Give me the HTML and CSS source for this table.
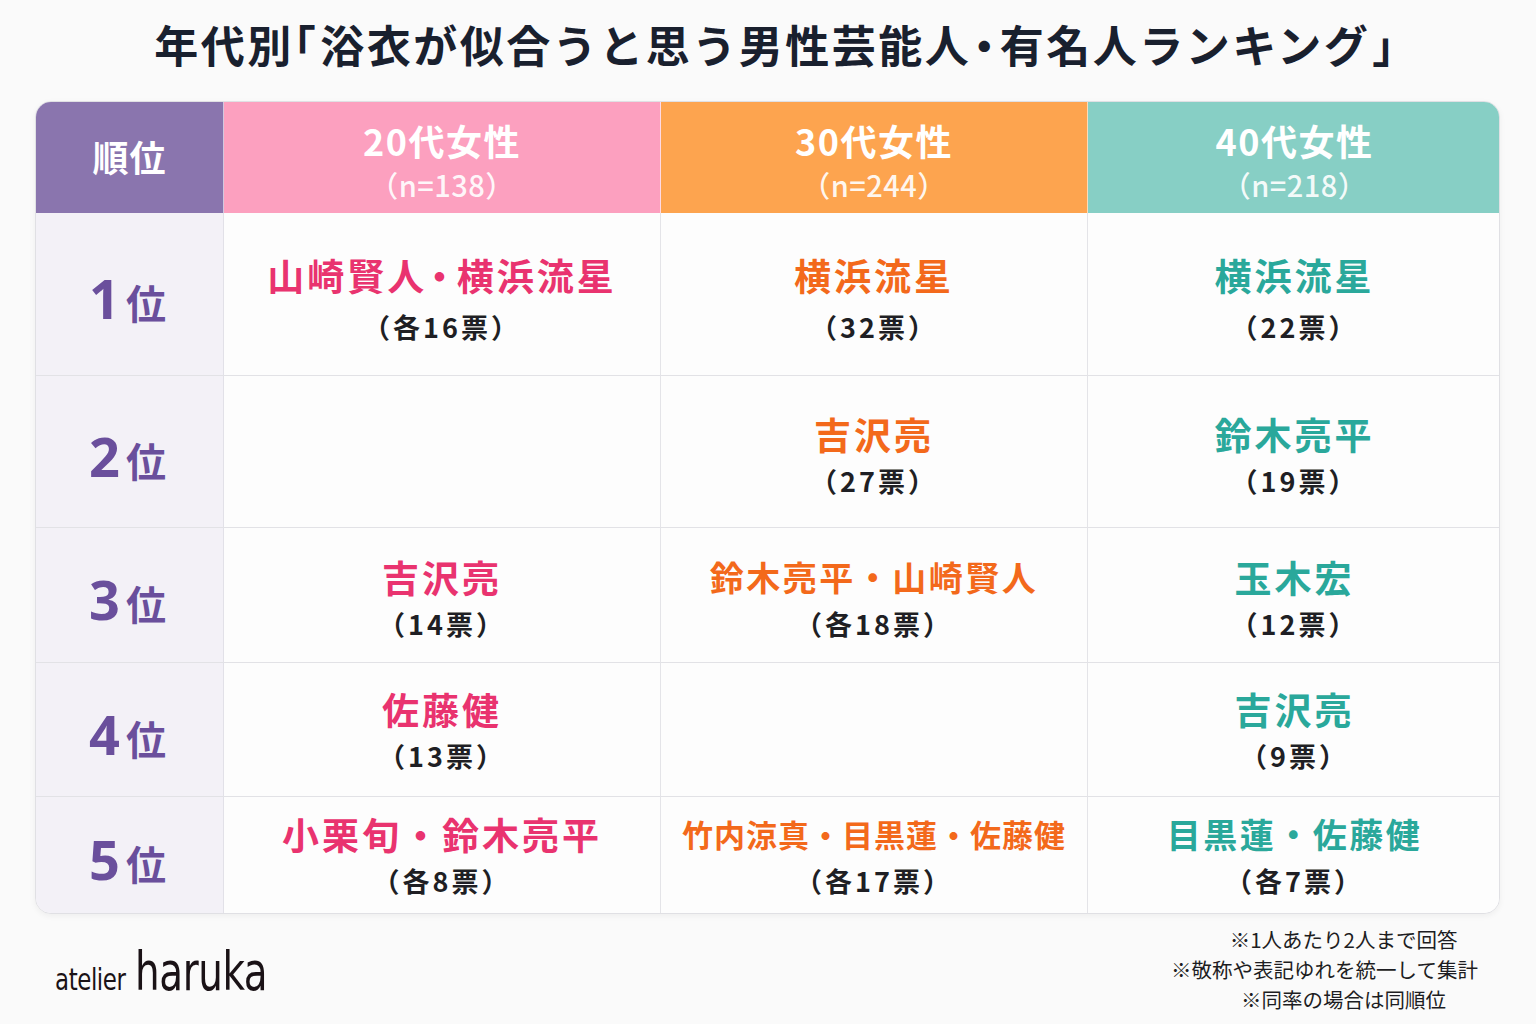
FILE: index.html
```html
<!DOCTYPE html>
<html lang="ja">
<head>
<meta charset="utf-8">
<title>年代別「浴衣が似合うと思う男性芸能人・有名人ランキング」</title>
<link rel="stylesheet" href="styles.css">
</head>
<body>
<div class="page">
  <h1 class="title">年代別<span class="br">「</span>浴衣が似合うと思う男性芸能人<span class="dot">・</span>有名人ランキング<span class="br end">」</span></h1>
  <div class="table">
    <div class="hd hd-rank">順位</div>
    <div class="hd hd-20"><span class="age">20代女性</span><span class="n">（n=138）</span></div>
    <div class="hd hd-30"><span class="age">30代女性</span><span class="n">（n=244）</span></div>
    <div class="hd hd-40"><span class="age">40代女性</span><span class="n">（n=218）</span></div>

    <div class="rank r1"><span class="num">1</span><span class="i">位</span></div>
    <div class="cell r1"><span class="name pink">山崎賢人<span class="ndot">・</span>横浜流星</span><span class="votes">（各16票）</span></div>
    <div class="cell r1"><span class="name orange">横浜流星</span><span class="votes">（32票）</span></div>
    <div class="cell r1 last"><span class="name teal">横浜流星</span><span class="votes">（22票）</span></div>

    <div class="rank r2"><span class="num">2</span><span class="i">位</span></div>
    <div class="cell r2"></div>
    <div class="cell r2"><span class="name orange">吉沢亮</span><span class="votes">（27票）</span></div>
    <div class="cell r2 last"><span class="name teal">鈴木亮平</span><span class="votes">（19票）</span></div>

    <div class="rank r3"><span class="num">3</span><span class="i">位</span></div>
    <div class="cell r3"><span class="name pink">吉沢亮</span><span class="votes">（14票）</span></div>
    <div class="cell r3"><span class="name orange mid">鈴木亮平・山崎賢人</span><span class="votes">（各18票）</span></div>
    <div class="cell r3 last"><span class="name teal">玉木宏</span><span class="votes">（12票）</span></div>

    <div class="rank r4"><span class="num">4</span><span class="i">位</span></div>
    <div class="cell r4"><span class="name pink">佐藤健</span><span class="votes">（13票）</span></div>
    <div class="cell r4"></div>
    <div class="cell r4 last"><span class="name teal">吉沢亮</span><span class="votes">（9票）</span></div>

    <div class="rank r5 bottom"><span class="num">5</span><span class="i">位</span></div>
    <div class="cell r5 bottom"><span class="name pink">小栗旬・鈴木亮平</span><span class="votes">（各8票）</span></div>
    <div class="cell r5 bottom"><span class="name orange small">竹内涼真・目黒蓮・佐藤健</span><span class="votes">（各17票）</span></div>
    <div class="cell r5 bottom last"><span class="name teal mid">目黒蓮・佐藤健</span><span class="votes">（各7票）</span></div>
  </div>
  <div class="footer">
    <div class="logo"><span class="atelier">atelier</span><span class="haruka">haruka</span></div>
    <div class="notes">
      <p class="n1">※1人あたり2人まで回答</p>
      <p class="n2">※敬称や表記ゆれを統一して集計</p>
      <p class="n3">※同率の場合は同順位</p>
    </div>
  </div>
</div>
</body>
</html>
```
FILE: styles.css
```css
* { box-sizing: border-box; }
html, body { margin: 0; padding: 0; }
body {
  background: #fafafa;
  font-family: "Noto Sans CJK JP", "Noto Sans", sans-serif;
  color: #1b2130;
  width: 1536px;
  height: 1024px;
  overflow: hidden;
}
.page {
  padding: 0 36px 0 35px;
}
.title {
  margin: 0;
  height: 101px;
  display: flex;
  align-items: center;
  justify-content: center;
  padding: 0 0 14px 16px;
  font-size: 44px;
  font-weight: 700;
  letter-spacing: 2.5px;
  color: #19202e;
  white-space: nowrap;
}
.title .br, .title .dot { font-feature-settings: "halt" 1; }
.title .br { margin-right: 2px; }
.title .br.end { margin-left: 2px; margin-right: 0; }
.title .dot { margin: 0 2px; }
.table {
  display: grid;
  grid-template-columns: 188px 437px 427px 413px;
  grid-template-rows: 111px 163px 152px 135px 134px 116px;
  border: 1px solid #e0e0e4;
  border-radius: 16px;
  overflow: hidden;
  background: #fdfdfd;
  box-shadow: 0 2px 6px rgba(0,0,0,0.05);
}
.hd {
  display: flex;
  flex-direction: column;
  align-items: center;
  justify-content: center;
  color: #fff;
  font-weight: 700;
  border-right: 1px solid rgba(255,255,255,0.6);
}
.hd-rank { background: #8a75ae; font-size: 36px; padding-bottom: 4px; letter-spacing: 1px; }
.hd-20 { background: #fca0bf; }
.hd-30 { background: #fda44f; }
.hd-40 { background: #87cfc5; border-right: none; }
.age { font-size: 36px; line-height: 40px; letter-spacing: 1.5px; margin-top: 6px; }
.n { font-size: 29px; font-weight: 500; line-height: 34px; margin-top: 7px; color: rgba(255,255,255,0.92); letter-spacing: 0.5px; }

.rank {
  display: flex;
  align-items: baseline;
  justify-content: center;
  align-content: center;
  flex-wrap: wrap;
  background: #f3f1f7;
  color: #6a4f9c;
  font-weight: 700;
  border-right: 1px solid #e2e1e8;
  border-bottom: 1px solid #e2e2e6;
  padding-top: 12px;
  padding-right: 4px;
}
.rank .num { font-size: 54px; line-height: 60px; font-family: "Noto Sans", "Open Sans", sans-serif; font-weight: 700; margin-right: 6px; }
.rank .i { font-size: 40px; line-height: 60px; }
.cell {
  display: flex;
  flex-direction: column;
  align-items: center;
  justify-content: center;
  border-right: 1px solid #e4e4e8;
  border-bottom: 1px solid #e2e2e6;
  background: #fdfdfd;
  padding-top: 6px;
}
.cell.r1 { padding-top: 8px; }
.cell.r1 .name { margin-bottom: 13px; }
.cell.r4 { padding-top: 0; }
.cell.r5 { padding-top: 0; }
.cell.last { border-right: none; }
.bottom { border-bottom: none; }
.name {
  font-size: 37px;
  line-height: 44px;
  font-weight: 700;
  letter-spacing: 3px;
  margin-bottom: 8px;
}
.name .ndot { font-feature-settings: "halt" 1; margin: 0 5px 0 3px; }
.name.mid { font-size: 34px; letter-spacing: 2.5px; }
.name.small { font-size: 31px; letter-spacing: 1px; }
.pink { color: #e9336f; }
.orange { color: #f3691b; }
.teal { color: #2aa89b; }
.votes {
  font-size: 27px;
  line-height: 34px;
  font-weight: 700;
  color: #1f1f24;
  letter-spacing: 3px;
}

.footer {
  display: flex;
  justify-content: space-between;
  align-items: flex-start;
  padding: 10px 22px 0 20px;
}
.logo {
  display: flex;
  align-items: baseline;
  padding-top: 16px;
  color: #1a1216;
  font-family: "Liberation Sans Narrow", "DejaVu Sans Condensed", "Liberation Sans", sans-serif;
  font-stretch: condensed;
}
.atelier { font-size: 30px; letter-spacing: -0.5px; margin-right: 10px; transform: scaleX(0.85); transform-origin: left; display: inline-block; width: 70px; }
.haruka { font-size: 54px; letter-spacing: -0.5px; transform: scaleX(0.8); transform-origin: left; display: inline-block; }
.notes {
  text-align: center;
  font-size: 20.5px;
  line-height: 30px;
  color: #1d1d22;
}
.notes p { margin: 0; }
.notes .n1 { padding-left: 38px; }
.notes .n3 { padding-left: 38px; }
```
